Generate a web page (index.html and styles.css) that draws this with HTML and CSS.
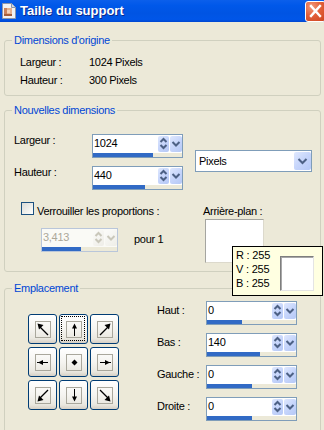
FILE: index.html
```html
<!DOCTYPE html>
<html lang="fr">
<head>
<meta charset="utf-8">
<title>Taille du support</title>
<link rel="stylesheet" href="styles.css">
</head>
<body>
<div class="window">
  <div class="titlebar">
    <svg class="app-icon" width="14" height="16" viewBox="0 0 14 16">
      <path d="M0.5 0.5H9.5L13.5 4.5V15.5H0.5Z" fill="#F2F2F2" stroke="#8B95AA"/>
      <path d="M9.5 0.5V4.5H13.5" fill="#D5DAE3" stroke="#8B95AA"/>
      <rect x="2" y="5" width="8" height="8" fill="#E6B18C"/>
      <rect x="2" y="5" width="3" height="8" fill="#C9825C"/>
      <rect x="5" y="7" width="3" height="3" fill="#F3D2B8"/>
      <rect x="2" y="11" width="8" height="2" fill="#A45E3C"/>
    </svg>
    <span class="title">Taille du support</span>
    <span class="close">
      <svg width="19" height="19" viewBox="0 0 19 19"><path d="M5 4L14 14M14 4L5 14" stroke="#fff" stroke-width="2.4" stroke-linecap="square"/></svg>
    </span>
  </div>

  <div class="client">
    <fieldset class="group g1">
      <legend>Dimensions d'origine</legend>
      <div class="info">
        <span>Largeur :</span><span>1024 Pixels</span>
        <span>Hauteur :</span><span>300 Pixels</span>
      </div>
    </fieldset>

    <fieldset class="group g2">
      <legend>Nouvelles dimensions</legend>
      <div class="dims">
        <span class="lbl r1">Largeur :</span>
        <div class="spin s1">
          <div class="spin-top">
            <span class="spin-val">1024</span>
            <span class="spin-ud"><svg width="11" height="16" viewBox="0 0 11 16"><path d="M2.5 6L5.5 3L8.5 6M2.5 9L5.5 12L8.5 9" fill="none" stroke="#4D6185" stroke-width="2"/></svg></span>
            <span class="spin-dd"><svg width="12" height="16" viewBox="0 0 12 16"><path d="M2.5 6L6 9.5L9.5 6" fill="none" stroke="#4D6185" stroke-width="2"/></svg></span>
          </div>
          <div class="spin-track"><div class="spin-fill" style="width:60px"></div></div>
        </div>
        <div class="combo">
          <span class="combo-val">Pixels</span>
          <span class="combo-btn"><svg width="17" height="18" viewBox="0 0 17 18"><path d="M4.5 7L8.5 11L12.5 7" fill="none" stroke="#4D6185" stroke-width="2"/></svg></span>
        </div>
        <span class="lbl r2">Hauteur :</span>
        <div class="spin s2">
          <div class="spin-top">
            <span class="spin-val">440</span>
            <span class="spin-ud"><svg width="11" height="16" viewBox="0 0 11 16"><path d="M2.5 6L5.5 3L8.5 6M2.5 9L5.5 12L8.5 9" fill="none" stroke="#4D6185" stroke-width="2"/></svg></span>
            <span class="spin-dd"><svg width="12" height="16" viewBox="0 0 12 16"><path d="M2.5 6L6 9.5L9.5 6" fill="none" stroke="#4D6185" stroke-width="2"/></svg></span>
          </div>
          <div class="spin-track"><div class="spin-fill" style="width:52px"></div></div>
        </div>
      </div>

      <div class="lower">
        <div class="lock">
          <div class="check-row">
            <span class="checkbox"></span>
            <span class="check-text">Verrouiller les proportions :</span>
          </div>
          <div class="ratio-row">
            <div class="spin small disabled">
              <div class="spin-top">
                <span class="spin-val">3,413</span>
                <span class="spin-ud"><svg width="11" height="16" viewBox="0 0 11 16"><path d="M2.5 6L5.5 3L8.5 6M2.5 9L5.5 12L8.5 9" fill="none" stroke="#C9C7BA" stroke-width="2"/></svg></span>
                <span class="spin-dd"><svg width="12" height="16" viewBox="0 0 12 16"><path d="M2.5 6L6 9.5L9.5 6" fill="none" stroke="#C9C7BA" stroke-width="2"/></svg></span>
              </div>
              <div class="spin-track"><div class="spin-fill" style="width:39px"></div></div>
            </div>
            <span class="pour">pour 1</span>
          </div>
        </div>
        <div class="bg-col">
          <span class="bg-text">Arrière-plan :</span>
          <div class="bg-swatch"></div>
        </div>
      </div>
    </fieldset>

    <fieldset class="group g3">
      <legend>Emplacement</legend>
      <div class="place">
        <div class="anchors">
          <div class="anchor"><span class="face"><svg width="14" height="15" viewBox="0 0 14 15"><path d="M12 13L4 5" stroke="#000" stroke-width="1.2"/><path d="M1.5 1.5L7.5 3L3 7.5Z"/></svg></span></div>
          <div class="anchor focus"><span class="face"><svg width="14" height="15" viewBox="0 0 14 15"><path d="M7.5 14V5" stroke="#000"/><path d="M7.5 1.5L10 6.5H5Z"/></svg></span></div>
          <div class="anchor"><span class="face"><svg width="14" height="15" viewBox="0 0 14 15"><path d="M2 13L10 5" stroke="#000" stroke-width="1.2"/><path d="M12.5 1.5L6.5 3L11 7.5Z"/></svg></span></div>
          <div class="anchor"><span class="face"><svg width="14" height="15" viewBox="0 0 14 15"><path d="M1 7.5H12" stroke="#000"/><path d="M2 7.5L7 5V10Z"/></svg></span></div>
          <div class="anchor"><span class="face"><svg width="14" height="15" viewBox="0 0 14 15"><path d="M7.5 4.5L10.5 7.5L7.5 10.5L4.5 7.5Z"/></svg></span></div>
          <div class="anchor"><span class="face"><svg width="14" height="15" viewBox="0 0 14 15"><path d="M2 7.5H13" stroke="#000"/><path d="M12 7.5L7 5V10Z"/></svg></span></div>
          <div class="anchor"><span class="face"><svg width="14" height="15" viewBox="0 0 14 15"><path d="M12 2L4 10" stroke="#000" stroke-width="1.2"/><path d="M1.5 13.5L3 7.5L7.5 12Z"/></svg></span></div>
          <div class="anchor"><span class="face"><svg width="14" height="15" viewBox="0 0 14 15"><path d="M7.5 1V10" stroke="#000"/><path d="M7.5 13.5L10 8.5H5Z"/></svg></span></div>
          <div class="anchor"><span class="face"><svg width="14" height="15" viewBox="0 0 14 15"><path d="M2 2L10 10" stroke="#000" stroke-width="1.2"/><path d="M12.5 13.5L6.5 12L11 7.5Z"/></svg></span></div>
        </div>

        <div class="offsets">
          <span class="lbl">Haut :</span>
          <div class="spin">
            <div class="spin-top">
              <span class="spin-val">0</span>
              <span class="spin-ud"><svg width="11" height="16" viewBox="0 0 11 16"><path d="M2.5 6L5.5 3L8.5 6M2.5 9L5.5 12L8.5 9" fill="none" stroke="#4D6185" stroke-width="2"/></svg></span>
              <span class="spin-dd"><svg width="12" height="16" viewBox="0 0 12 16"><path d="M2.5 6L6 9.5L9.5 6" fill="none" stroke="#4D6185" stroke-width="2"/></svg></span>
            </div>
            <div class="spin-track"><div class="spin-fill" style="width:35px"></div></div>
          </div>
          <span class="lbl">Bas :</span>
          <div class="spin">
            <div class="spin-top">
              <span class="spin-val">140</span>
              <span class="spin-ud"><svg width="11" height="16" viewBox="0 0 11 16"><path d="M2.5 6L5.5 3L8.5 6M2.5 9L5.5 12L8.5 9" fill="none" stroke="#4D6185" stroke-width="2"/></svg></span>
              <span class="spin-dd"><svg width="12" height="16" viewBox="0 0 12 16"><path d="M2.5 6L6 9.5L9.5 6" fill="none" stroke="#4D6185" stroke-width="2"/></svg></span>
            </div>
            <div class="spin-track"><div class="spin-fill" style="width:53px"></div></div>
          </div>
          <span class="lbl">Gauche :</span>
          <div class="spin">
            <div class="spin-top">
              <span class="spin-val">0</span>
              <span class="spin-ud"><svg width="11" height="16" viewBox="0 0 11 16"><path d="M2.5 6L5.5 3L8.5 6M2.5 9L5.5 12L8.5 9" fill="none" stroke="#4D6185" stroke-width="2"/></svg></span>
              <span class="spin-dd"><svg width="12" height="16" viewBox="0 0 12 16"><path d="M2.5 6L6 9.5L9.5 6" fill="none" stroke="#4D6185" stroke-width="2"/></svg></span>
            </div>
            <div class="spin-track"><div class="spin-fill" style="width:45px"></div></div>
          </div>
          <span class="lbl">Droite :</span>
          <div class="spin">
            <div class="spin-top">
              <span class="spin-val">0</span>
              <span class="spin-ud"><svg width="11" height="16" viewBox="0 0 11 16"><path d="M2.5 6L5.5 3L8.5 6M2.5 9L5.5 12L8.5 9" fill="none" stroke="#4D6185" stroke-width="2"/></svg></span>
              <span class="spin-dd"><svg width="12" height="16" viewBox="0 0 12 16"><path d="M2.5 6L6 9.5L9.5 6" fill="none" stroke="#4D6185" stroke-width="2"/></svg></span>
            </div>
            <div class="spin-track"><div class="spin-fill" style="width:45px"></div></div>
          </div>
        </div>
      </div>
    </fieldset>
  </div>

  <div class="tooltip">
    <div class="tip-lines">
      <div>R : 255</div>
      <div>V : 255</div>
      <div>B : 255</div>
    </div>
    <div class="tip-swatch"></div>
  </div>
</div>
</body>
</html>
```

FILE: styles.css
```css
* { box-sizing: border-box; }

html, body {
  margin: 0;
  padding: 0;
}

body {
  width: 324px;
  height: 430px;
  overflow: hidden;
  background: #ECE9D8;
  font-family: "Liberation Sans", Arial, sans-serif;
  font-size: 11px;
  letter-spacing: -0.3px;
  color: #000;
}

.window {
  position: relative;
  width: 324px;
  height: 430px;
  overflow: hidden;
}

/* ---------- title bar ---------- */
.titlebar {
  display: flex;
  align-items: flex-start;
  height: 22px;
  overflow: hidden;
  background: linear-gradient(#0B5FEB 0%, #0058E9 25%, #0054E3 60%, #0056E8 88%, #0046D0 100%);
}

.app-icon {
  flex: none;
  margin: 3px 0 0 2px;
}

.title {
  margin-left: 4px;
  font: bold 13px/22px "Liberation Sans", Arial, sans-serif;
  letter-spacing: 0;
  color: #fff;
  text-shadow: 1px 1px 0 #0A2A8E;
  white-space: nowrap;
}

.close {
  flex: none;
  display: flex;
  width: 21px;
  height: 21px;
  margin: 1px -2px 0 auto;
  border: 1px solid #fff;
  border-radius: 3px;
  background: radial-gradient(circle at 30% 25%, #F29A7C 0%, #E3603A 45%, #CC4420 100%);
}

/* ---------- group boxes ---------- */
.client {
  padding-top: 12px;
}

.group {
  min-width: 0;
  margin: 0 3px 0 4px;
  padding: 0 2px 0 7px;
  border: 1px solid #D0D0BF;
  border-radius: 3px;
}

.group legend {
  padding: 0 2px;
  line-height: 13px;
  color: #0046D5;
}

.g1 {
  padding-top: 6px;
  padding-bottom: 6px;
}

.info {
  display: grid;
  grid-template-columns: 69px auto;
  line-height: 18px;
  margin-left: 8px;
}

.g2 {
  margin-top: 8px;
  padding-top: 17px;
  padding-bottom: 8px;
}

.dims {
  display: grid;
  grid-template-columns: 78px 91px auto;
  grid-template-rows: 24px 24px;
  row-gap: 8px;
  margin-left: 2px;
}

.dims .lbl { line-height: 12px; grid-column: 1; }
.dims .r1 { grid-row: 1; }
.dims .r2 { grid-row: 2; }
.dims .s1 { grid-column: 2; grid-row: 1; }
.dims .s2 { grid-column: 2; grid-row: 2; }

/* ---------- spin edit ---------- */
.spin {
  display: flex;
  flex-direction: column;
  width: 91px;
  height: 24px;
  border: 1px solid #7F9DB9;
  background: #fff;
}

.spin-top {
  display: flex;
  height: 18px;
}

.spin-val {
  flex: 1;
  line-height: 16px;
  padding-left: 1px;
  white-space: nowrap;
}

.spin-ud,
.spin-dd {
  display: flex;
  height: 16px;
  margin-top: 1px;
  border-radius: 2px;
  background: linear-gradient(135deg, #DFE8FE 0%, #C6D5FB 50%, #B5C8F6 100%);
}

.spin-ud { width: 11px; }
.spin-dd { width: 12px; margin-left: 1px; }

.spin-track {
  height: 4px;
  background: #ECE9D8;
}

.spin-fill {
  height: 4px;
  background: #316AC5;
}

.spin.small { width: 77px; }

.spin.disabled {
  border-color: #B9C6DA;
  background: #FAFAF6;
}

.spin.disabled .spin-val { color: #ACA899; }

.spin.disabled .spin-ud,
.spin.disabled .spin-dd {
  background: linear-gradient(135deg, #FBFBF9, #EEEDE7);
}

.spin.disabled .spin-track { background: #ECE9D8; }

/* ---------- combo ---------- */
.combo {
  grid-column: 3;
  grid-row: 1 / span 2;
  align-self: center;
  display: flex;
  align-items: center;
  width: 117px;
  height: 22px;
  margin: 0 0 2px 12px;
  padding-left: 3px;
  border: 1px solid #7F9DB9;
  background: #fff;
}

.combo-val {
  flex: 1;
  line-height: 20px;
}

.combo-btn {
  display: flex;
  width: 17px;
  height: 18px;
  border-radius: 2px;
  background: linear-gradient(135deg, #DFE8FE 0%, #C6D5FB 50%, #B5C8F6 100%);
}

/* ---------- lock / background ---------- */
.lower {
  display: flex;
  margin-top: 12px;
}

.lock {
  width: 182px;
  margin-left: 9px;
}

.check-row {
  display: flex;
  align-items: flex-start;
}

.checkbox {
  flex: none;
  width: 13px;
  height: 13px;
  border: 1px solid #1C5180;
  background: linear-gradient(135deg, #DCDCD7 0%, #F4F4F1 70%, #FFFFFF 100%);
}

.check-text {
  margin: 2px 0 0 3px;
  line-height: 14px;
  white-space: nowrap;
}

.ratio-row {
  display: flex;
  align-items: flex-start;
  margin: 10px 0 0 20px;
}

.pour {
  margin: 2px 0 0 16px;
  line-height: 18px;
}

.bg-col {
  display: flex;
  flex-direction: column;
  align-items: flex-start;
}

.bg-text {
  margin-top: 2px;
  line-height: 14px;
  white-space: nowrap;
}

.bg-swatch {
  width: 59px;
  height: 44px;
  margin: 1px 0 0 2px;
  background: #fff;
  border: 1px solid;
  border-color: #A5A5A0 #DCD9CC #DCD9CC #A5A5A0;
}

/* ---------- placement ---------- */
.g3 {
  margin-top: 10px;
  padding-bottom: 20px;
}

.place {
  display: flex;
  align-items: flex-start;
}

.anchors {
  display: grid;
  grid-template-columns: repeat(3, 29px);
  grid-template-rows: repeat(3, 30px);
  column-gap: 2px;
  row-gap: 3px;
  margin: 19px 0 0 16px;
}

.anchor {
  position: relative;
  display: flex;
  align-items: center;
  justify-content: center;
  border: 1px solid #003C74;
  border-radius: 3px;
  background: linear-gradient(#FFFFFF 0%, #F5F4F0 50%, #E9E7DF 85%, #D6D0C5 100%);
}

.face {
  display: flex;
  width: 16px;
  height: 17px;
  border: 1px solid #A9A79C;
}

.anchor.focus::after {
  content: "";
  position: absolute;
  left: 1px;
  top: 1px;
  right: 2px;
  bottom: 2px;
  border: 1px dotted #000;
}

.offsets {
  display: grid;
  grid-template-columns: 49px 91px;
  grid-auto-rows: 24px;
  row-gap: 8px;
  margin: 6px 0 0 38px;
}

.offsets .lbl {
  line-height: 18px;
  white-space: nowrap;
}

/* ---------- tooltip ---------- */
.tooltip {
  position: absolute;
  left: 232px;
  top: 246px;
  display: flex;
  width: 91px;
  height: 50px;
  padding: 1px 8px 0 3px;
  border: 1px solid #000;
  background: #FFFFE1;
  letter-spacing: -0.2px;
}

.tip-lines {
  line-height: 14px;
  white-space: nowrap;
}

.tip-swatch {
  width: 34px;
  height: 35px;
  margin: 8px 0 0 auto;
  background: #fff;
  border: 1px solid;
  border-color: #7E7E7E #E4E4E4 #E4E4E4 #7E7E7E;
  box-shadow: inset 1px 1px 0 #A8A8A8;
}
```
